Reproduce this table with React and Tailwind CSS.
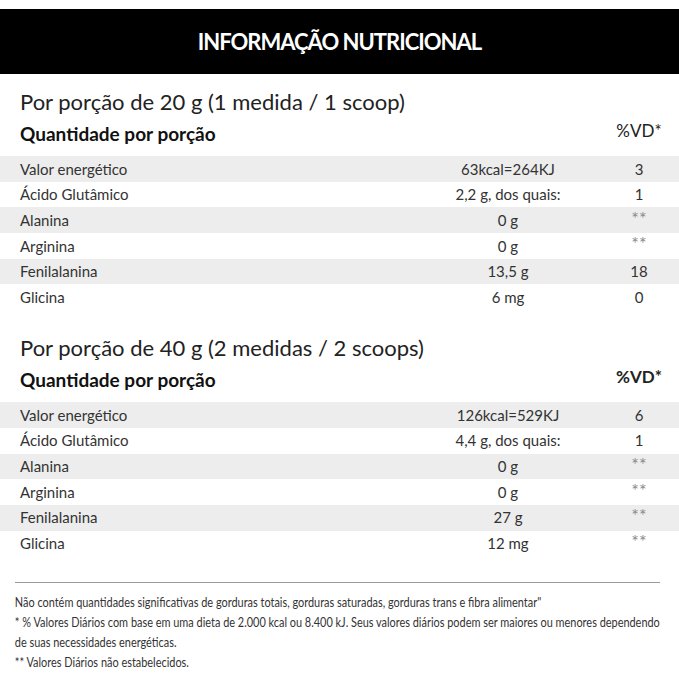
import React from "react";

const serving20 = [
  ["Valor energético", "63kcal=264KJ", "3"],
  ["Ácido Glutâmico", "2,2 g, dos quais:", "1"],
  ["Alanina", "0 g", "**"],
  ["Arginina", "0 g", "**"],
  ["Fenilalanina", "13,5 g", "18"],
  ["Glicina", "6 mg", "0"],
];

const serving40 = [
  ["Valor energético", "126kcal=529KJ", "6"],
  ["Ácido Glutâmico", "4,4 g, dos quais:", "1"],
  ["Alanina", "0 g", "**"],
  ["Arginina", "0 g", "**"],
  ["Fenilalanina", "27 g", "**"],
  ["Glicina", "12 mg", "**"],
];

function Section({ title, rows, boldVd }) {
  return (
    <div>
      <p className="pl-[20px] text-[22px] leading-[26px] text-[#222]">{title}</p>
      <div className="mt-[6px] flex items-end">
        <span className="flex-1 pl-[20px] text-[19px] font-bold leading-[24px] text-[#111]">
          Quantidade por porção
        </span>
        <span
          className={`mb-[5px] w-[80px] text-center text-[17px] leading-[20px] text-[#222] ${
            boldVd ? "font-bold" : ""
          }`}
        >
          %VD*
        </span>
      </div>

      {/* table rows */}
      <div className="mt-[10px]">
        {rows.map(([name, amount, vd], i) => (
          <div
            key={name}
            className={`flex h-[25.7px] items-center text-[15px] text-[#333] ${
              i % 2 === 0 ? "bg-[#ededed]" : "bg-white"
            }`}
          >
            <span className="flex-1 pl-[20px]">{name}</span>
            <span className="w-[182px] text-center">{amount}</span>
            <span
              className={`w-[80px] text-center ${
                vd === "**" ? "mb-[4px] text-[18px] text-[#8a8a8a]" : ""
              }`}
            >
              {vd}
            </span>
          </div>
        ))}
      </div>
    </div>
  );
}

export default function App() {
  return (
    <div className="w-[679px] overflow-hidden bg-white pt-[9px] font-['Lato',sans-serif]">
      <div className="flex h-[65px] items-center justify-center bg-black">
        <h1 className="text-[22px] font-bold tracking-[-1px] text-white">
          INFORMAÇÃO NUTRICIONAL
        </h1>
      </div>

      <div className="pt-[15px]">
        <Section title="Por porção de 20 g (1 medida / 1 scoop)" rows={serving20} />
      </div>

      <div className="pt-[25px]">
        <Section
          title="Por porção de 40 g (2 medidas / 2 scoops)"
          rows={serving40}
          boldVd
        />
      </div>

      <div className="mt-[26px] ml-[15px] w-[645px] border-t border-[#9a9a9a]" />

      {/* footnotes */}
      <div className="mt-[9px] w-[900px] origin-left scale-x-[0.78] pl-[19px] text-[14px] leading-[20px] text-[#333] whitespace-nowrap">
        <p>
          Não contém quantidades significativas de gorduras totais, gorduras saturadas, gorduras trans e fibra alimentar"
        </p>
        <p>
          * % Valores Diários com base em uma dieta de 2.000 kcal ou 8.400 kJ. Seus valores diários podem ser maiores ou menores dependendo
        </p>
        <p>de suas necessidades energéticas.</p>
        <p>** Valores Diários não estabelecidos.</p>
      </div>
    </div>
  );
}
